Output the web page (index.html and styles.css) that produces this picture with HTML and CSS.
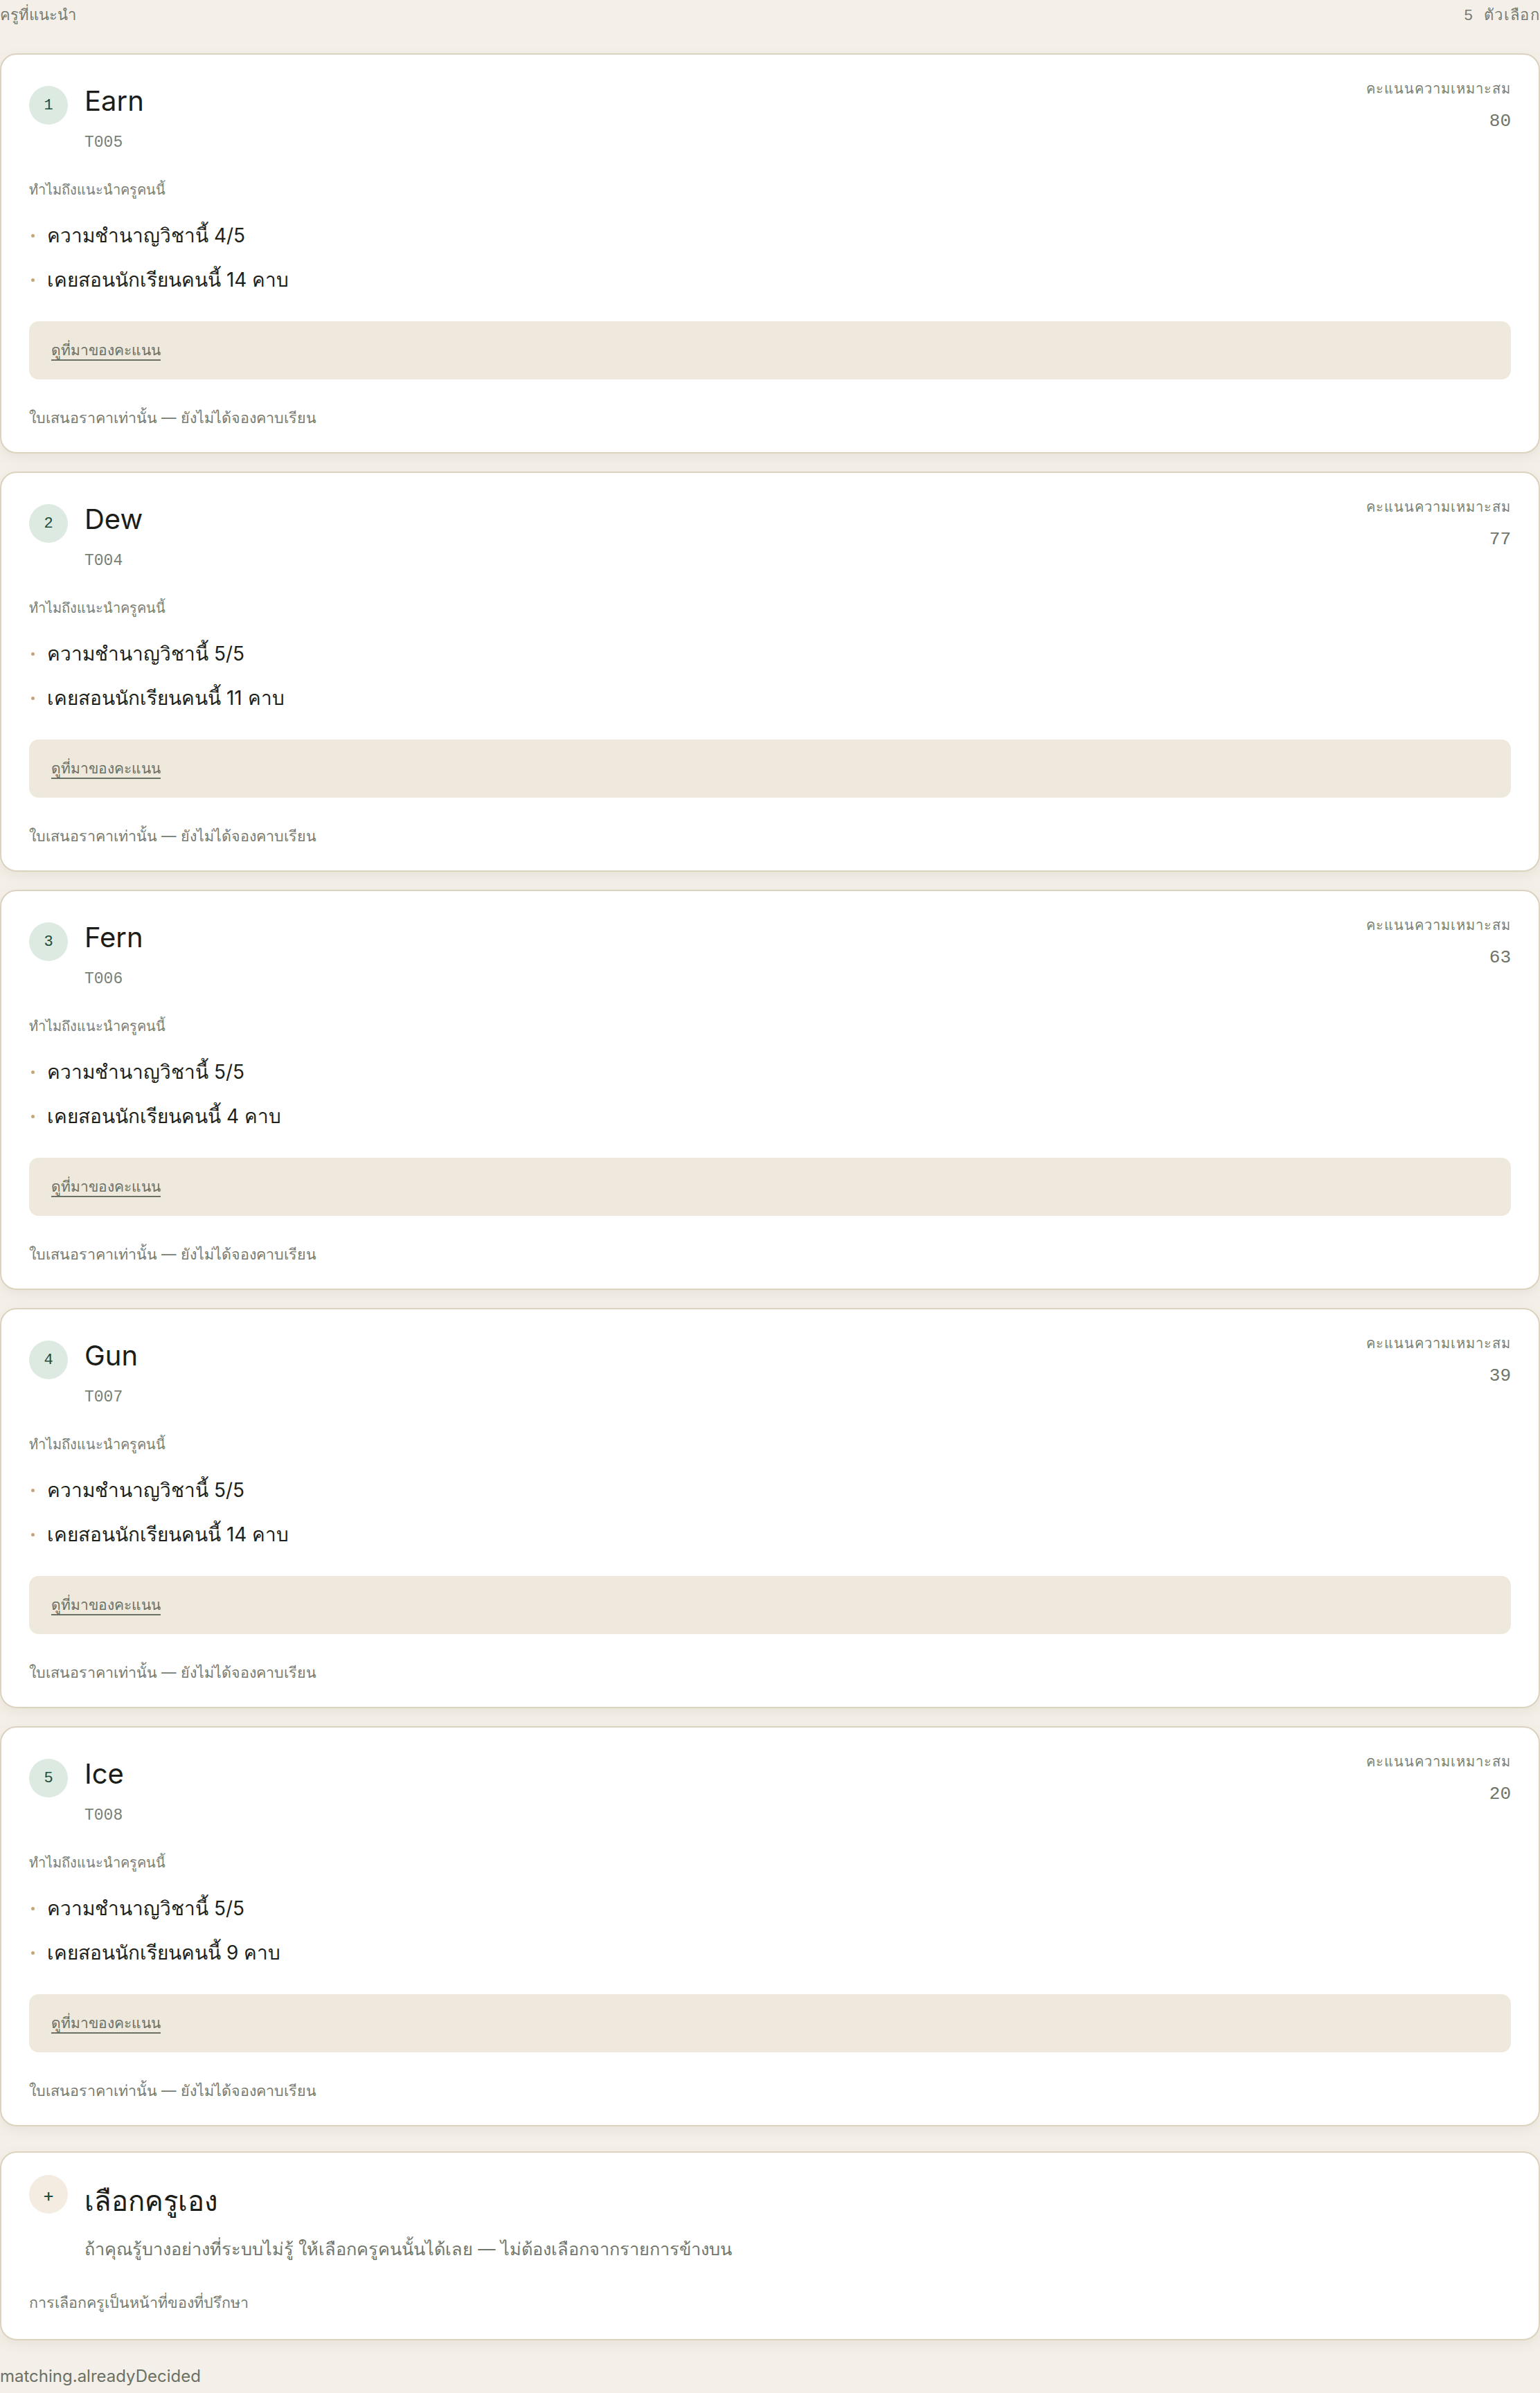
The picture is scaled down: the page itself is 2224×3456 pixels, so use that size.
FILE: index.html
```html
<!DOCTYPE html>
<html lang="th">
<head>
<meta charset="utf-8">
<title>ครูที่แนะนำ</title>
<link rel="stylesheet" href="styles.css">
</head>
<body>
<main class="page">
  <header class="list-head">
    <span class="list-title">ครูที่แนะนำ</span>
    <span class="list-count">5 ตัวเลือก</span>
  </header>

  <section class="cards">
    <article class="card">
      <div class="card-head">
        <div class="who">
          <span class="rank">1</span>
          <div class="who-text">
            <h2 class="name">Earn</h2>
            <div class="tid">T005</div>
          </div>
        </div>
        <div class="score">
          <div class="score-label">คะแนนความเหมาะสม</div>
          <div class="score-value">80</div>
        </div>
      </div>
      <div class="why-label">ทำไมถึงแนะนำครูคนนี้</div>
      <ul class="reasons">
        <li>ความชำนาญวิชานี้ 4/5</li>
        <li>เคยสอนนักเรียนคนนี้ 14 คาบ</li>
      </ul>
      <div class="source"><span class="source-link">ดูที่มาของคะแนน</span></div>
      <p class="note">ใบเสนอราคาเท่านั้น — ยังไม่ได้จองคาบเรียน</p>
    </article>

    <article class="card">
      <div class="card-head">
        <div class="who">
          <span class="rank">2</span>
          <div class="who-text">
            <h2 class="name">Dew</h2>
            <div class="tid">T004</div>
          </div>
        </div>
        <div class="score">
          <div class="score-label">คะแนนความเหมาะสม</div>
          <div class="score-value">77</div>
        </div>
      </div>
      <div class="why-label">ทำไมถึงแนะนำครูคนนี้</div>
      <ul class="reasons">
        <li>ความชำนาญวิชานี้ 5/5</li>
        <li>เคยสอนนักเรียนคนนี้ 11 คาบ</li>
      </ul>
      <div class="source"><span class="source-link">ดูที่มาของคะแนน</span></div>
      <p class="note">ใบเสนอราคาเท่านั้น — ยังไม่ได้จองคาบเรียน</p>
    </article>

    <article class="card">
      <div class="card-head">
        <div class="who">
          <span class="rank">3</span>
          <div class="who-text">
            <h2 class="name">Fern</h2>
            <div class="tid">T006</div>
          </div>
        </div>
        <div class="score">
          <div class="score-label">คะแนนความเหมาะสม</div>
          <div class="score-value">63</div>
        </div>
      </div>
      <div class="why-label">ทำไมถึงแนะนำครูคนนี้</div>
      <ul class="reasons">
        <li>ความชำนาญวิชานี้ 5/5</li>
        <li>เคยสอนนักเรียนคนนี้ 4 คาบ</li>
      </ul>
      <div class="source"><span class="source-link">ดูที่มาของคะแนน</span></div>
      <p class="note">ใบเสนอราคาเท่านั้น — ยังไม่ได้จองคาบเรียน</p>
    </article>

    <article class="card">
      <div class="card-head">
        <div class="who">
          <span class="rank">4</span>
          <div class="who-text">
            <h2 class="name">Gun</h2>
            <div class="tid">T007</div>
          </div>
        </div>
        <div class="score">
          <div class="score-label">คะแนนความเหมาะสม</div>
          <div class="score-value">39</div>
        </div>
      </div>
      <div class="why-label">ทำไมถึงแนะนำครูคนนี้</div>
      <ul class="reasons">
        <li>ความชำนาญวิชานี้ 5/5</li>
        <li>เคยสอนนักเรียนคนนี้ 14 คาบ</li>
      </ul>
      <div class="source"><span class="source-link">ดูที่มาของคะแนน</span></div>
      <p class="note">ใบเสนอราคาเท่านั้น — ยังไม่ได้จองคาบเรียน</p>
    </article>

    <article class="card">
      <div class="card-head">
        <div class="who">
          <span class="rank">5</span>
          <div class="who-text">
            <h2 class="name">Ice</h2>
            <div class="tid">T008</div>
          </div>
        </div>
        <div class="score">
          <div class="score-label">คะแนนความเหมาะสม</div>
          <div class="score-value">20</div>
        </div>
      </div>
      <div class="why-label">ทำไมถึงแนะนำครูคนนี้</div>
      <ul class="reasons">
        <li>ความชำนาญวิชานี้ 5/5</li>
        <li>เคยสอนนักเรียนคนนี้ 9 คาบ</li>
      </ul>
      <div class="source"><span class="source-link">ดูที่มาของคะแนน</span></div>
      <p class="note">ใบเสนอราคาเท่านั้น — ยังไม่ได้จองคาบเรียน</p>
    </article>
  </section>

  <article class="card card-manual">
    <div class="who">
      <span class="rank rank-plus">+</span>
      <div class="who-text">
        <h2 class="name name-manual">เลือกครูเอง</h2>
        <p class="manual-desc">ถ้าคุณรู้บางอย่างที่ระบบไม่รู้ ให้เลือกครูคนนั้นได้เลย — ไม่ต้องเลือกจากรายการข้างบน</p>
      </div>
    </div>
    <p class="note note-manual">การเลือกครูเป็นหน้าที่ของที่ปรึกษา</p>
  </article>

  <p class="decided">matching.alreadyDecided</p>
</main>
</body>
</html>
```

FILE: styles.css
```css
* {
  box-sizing: border-box;
}

html, body {
  margin: 0;
  padding: 0;
}

body {
  background: #f4f0e9;
  font-family: Inter, sans-serif;
  color: #1d1f1b;
}

.page {
  display: flex;
  flex-direction: column;
}

.list-head {
  display: flex;
  justify-content: space-between;
  align-items: baseline;
  padding-top: 7px;
  margin-bottom: 37px;
  font-family: "Liberation Mono", monospace;
  font-size: 22px;
  line-height: 33px;
  color: #767b72;
}

.list-count {
  letter-spacing: 0.06em;
}

.cards {
  display: flex;
  flex-direction: column;
  gap: 26px;
}

.card {
  background: #ffffff;
  border: 2px solid #dcd2bd;
  border-radius: 24px;
  box-shadow: 0 6px 18px rgba(120, 100, 60, 0.09);
  padding: 32px 40px 34px;
}

.card-head {
  display: flex;
  justify-content: space-between;
  align-items: flex-start;
}

.who {
  display: flex;
  align-items: flex-start;
  gap: 24px;
}

.rank {
  flex: none;
  width: 56px;
  height: 56px;
  margin-top: 13px;
  border-radius: 50%;
  background: #dceae2;
  color: #1f4d3b;
  display: flex;
  align-items: center;
  justify-content: center;
  font-family: "Liberation Mono", monospace;
  font-size: 22px;
}

.rank-plus {
  margin-top: 0;
  background: #f4ece0;
  font-family: Inter, sans-serif;
  font-size: 26px;
}

.name {
  margin: 0;
  font-size: 40px;
  font-weight: 400;
  line-height: 70px;
  color: #1b1d19;
}

.tid {
  margin-top: 8px;
  font-family: "Liberation Mono", monospace;
  font-size: 23px;
  line-height: 34px;
  color: #7a7f75;
}

.score {
  text-align: right;
}

.score-label {
  font-family: "Liberation Mono", monospace;
  font-size: 20px;
  line-height: 38px;
  letter-spacing: 0.05em;
  color: #7a7f75;
}

.score-value {
  margin-top: 9px;
  font-family: "Liberation Mono", monospace;
  font-size: 26px;
  line-height: 34px;
  color: #6f746a;
}

.why-label {
  margin-top: 38px;
  font-family: "Liberation Mono", monospace;
  font-size: 20px;
  line-height: 30px;
  color: #7a7f75;
}

.reasons {
  list-style: none;
  margin: 27px 0 0;
  padding: 0;
  display: flex;
  flex-direction: column;
  gap: 20px;
}

.reasons li {
  display: flex;
  align-items: center;
  gap: 18px;
  padding-left: 3px;
  font-size: 28px;
  line-height: 44px;
  color: #1d1f1b;
}

.reasons li::before {
  content: "";
  flex: none;
  width: 5px;
  height: 5px;
  border-radius: 50%;
  background: #c9a477;
}

.source {
  margin-top: 38px;
  background: #efe8dc;
  border-radius: 14px;
  padding: 24px 32px;
  font-size: 21px;
  line-height: 36px;
}

.source-link {
  color: #6b7166;
  text-decoration: underline;
  text-decoration-thickness: 2px;
  text-underline-offset: 6px;
}

.note {
  margin: 39px 0 0;
  font-size: 21.5px;
  line-height: 32px;
  color: #767b71;
}

.card-manual {
  margin-top: 36px;
  padding-bottom: 37px;
}

.name-manual {
  line-height: 76px;
}

.manual-desc {
  margin: 11px 0 0;
  font-size: 25.3px;
  line-height: 40px;
  color: #71776c;
}

.note-manual {
  margin-top: 41px;
  font-size: 21.5px;
}

.decided {
  margin: 34px 0 0;
  font-size: 24px;
  line-height: 36px;
  color: #6b7166;
}
```
